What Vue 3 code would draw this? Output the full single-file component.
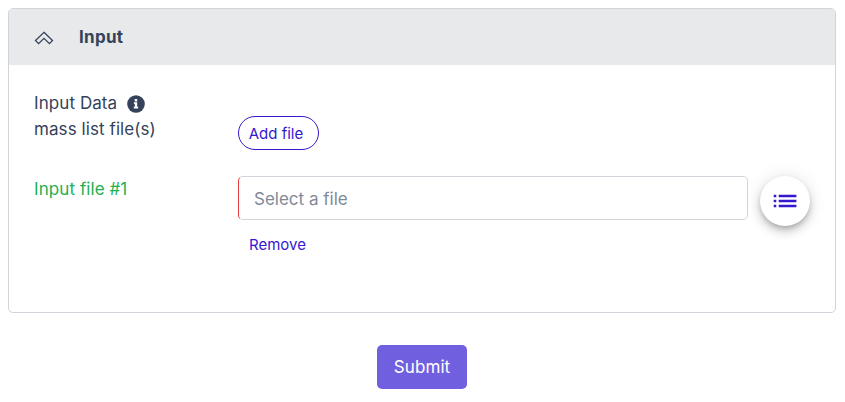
<script setup>
import { ref } from 'vue'

const open = ref(true)
const file = ref('')
</script>

<template>
  <main class="page">
    <section class="card">
      <header class="card-header" @click="open = !open">
        <svg class="chevron" viewBox="0 0 20 16" width="20" height="16" aria-hidden="true">
          <path d="M10 2.3 L18.5 10.5 L15.4 13.6 L10 8.4 L4.6 13.6 L1.5 10.5 Z" />
        </svg>
        <span class="card-title">Input</span>
      </header>
      <div v-show="open" class="card-body">
        <div class="row row-data">
          <div class="label">
            <div class="label-line">
              <span>Input Data</span>
              <svg class="info" viewBox="0 0 18 18" width="18" height="18" aria-hidden="true">
                <circle cx="9" cy="9" r="8.8" />
                <path d="M7.7 4h2.5v2.4H7.7zM6.9 7.3h3.3v4.5h1v1.6H6.8v-1.6h1V8.9h-.9z" />
              </svg>
            </div>
            <div class="label-line">mass list file(s)</div>
          </div>
          <button class="add" type="button">Add file</button>
        </div>
        <div class="row row-file">
          <label class="label label-file" for="file">Input file #1</label>
          <div class="file">
            <input id="file" v-model="file" class="field" type="text" placeholder="Select a file" />
            <button class="remove" type="button">Remove</button>
          </div>
          <button class="browse" type="button">
            <svg viewBox="0 0 24 16" width="24" height="16" aria-hidden="true">
              <path d="M.7 1.7h2.6v2.6H.7zM5.7 1.7h17.7v2.6H5.7zM.7 6.7h2.6v2.6H.7zM5.7 6.7h17.7v2.6H5.7zM.7 11.7h2.6v2.6H.7zM5.7 11.7h17.7v2.6H5.7z" />
            </svg>
          </button>
        </div>
      </div>
    </section>
    <button class="submit" type="button">Submit</button>
  </main>
</template>

<style>
body {
  background: #fff;
}
</style>

<style scoped>
.page {
  box-sizing: border-box;
  height: 402px;
  padding: 8px 9px 0 8px;
  display: flex;
  flex-direction: column;
  align-items: center;
  font-family: Inter, sans-serif;
  font-size: 17px;
  line-height: 26px;
  color: #34425a;
}
.page * {
  box-sizing: border-box;
}
button {
  font-family: inherit;
  margin: 0;
  padding: 0;
}
.card {
  width: 100%;
  height: 305px;
  border: 1px solid #d1d5db;
  border-radius: 5px;
  overflow: hidden;
}
.card-header {
  height: 56px;
  padding-left: 25px;
  display: flex;
  align-items: center;
  background: #e8e9eb;
}
.chevron {
  margin: 2px 25px 0 0;
  fill: none;
  stroke: #34425a;
  stroke-width: 1.3;
}
.card-title {
  font-weight: 700;
  letter-spacing: 0.3px;
}
.card-body {
  padding: 25px;
}
.row {
  display: flex;
}
.row-data {
  height: 86px;
}
.label {
  width: 204px;
  flex: none;
  letter-spacing: 0.08px;
}
.label-line {
  display: flex;
  align-items: center;
  gap: 10px;
}
.info {
  margin-top: 1px;
}
.info circle {
  fill: #34425a;
}
.info path {
  fill: #fff;
}
.add {
  width: 81px;
  height: 34px;
  margin-top: 26px;
  padding-right: 5px;
  border: 1px solid #3418cf;
  border-radius: 17px;
  background: #fff;
  color: #3418cf;
  font-size: 15px;
}
.label-file {
  color: #1eb053;
}
.file {
  width: 510px;
}
.field {
  display: block;
  width: 100%;
  height: 44px;
  padding: 1px 15px 0;
  border: 1px solid #d1d5db;
  border-left-color: #e53e3e;
  border-radius: 5px;
  background: #fff;
  font: inherit;
  outline: none;
}
.field::placeholder {
  color: #7f8999;
  opacity: 1;
}
.remove {
  display: block;
  height: 34px;
  margin: 7px 0 0 11px;
  border: 0;
  background: none;
  color: #3418cf;
  font-size: 15px;
}
.browse {
  display: flex;
  align-items: center;
  justify-content: center;
  width: 50px;
  height: 50px;
  margin-left: 12px;
  border: 0;
  border-radius: 50%;
  background: #fff;
  box-shadow: 0 3px 5px -1px rgba(0, 0, 0, 0.2), 0 6px 10px rgba(0, 0, 0, 0.14), 0 1px 18px rgba(0, 0, 0, 0.12);
}
.browse svg {
  fill: #3418cf;
}
.submit {
  width: 90px;
  height: 44px;
  margin-top: 32px;
  border: 0;
  border-radius: 5px;
  background: #7060df;
  color: #fff;
  font-size: 17px;
  letter-spacing: 0.1px;
}
</style>
